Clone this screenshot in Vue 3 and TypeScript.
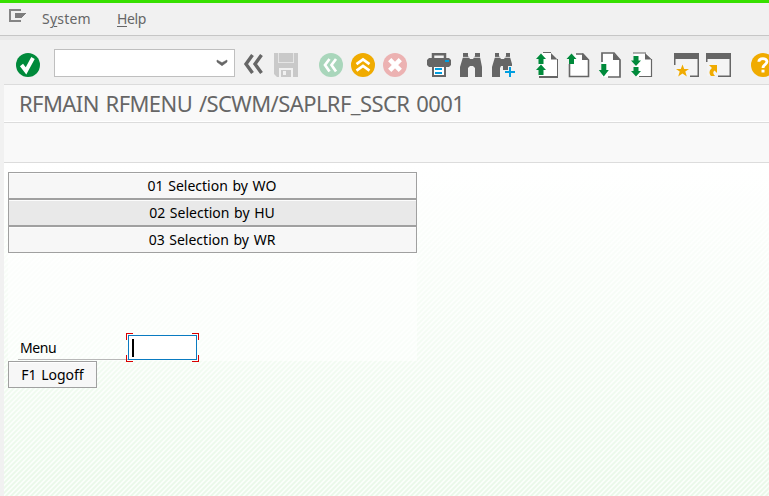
<script setup lang="ts">
import { ref } from 'vue'

interface MenuOption {
  label: string
  hovered?: boolean
}

const options: MenuOption[] = [
  { label: '01 Selection by WO' },
  { label: '02 Selection by HU', hovered: true },
  { label: '03 Selection by WR' },
]
const command = ref('')
</script>

<template>
  <div class="window">
    <header class="menubar">
      <svg class="sysicon" width="19" height="14" viewBox="0 0 19 14" shape-rendering="crispEdges">
        <path d="M12 1H1V12H12" fill="none" stroke="#858585" stroke-width="2" />
        <path d="M6 4H18L15 6L13 9H6Z" fill="#7d7d7d" />
      </svg>
      <span class="menu system">S<u>y</u>stem</span>
      <span class="menu help"><u>H</u>elp</span>
    </header>
    <div class="frame">
      <div class="toolbar">
        <svg class="ic enter" viewBox="0 0 28 28">
          <circle cx="14" cy="14" r="12" fill="#008a3b" />
          <path d="M7.5 14L12 20L19 7" fill="none" stroke="#fff" stroke-width="3.9" />
        </svg>
        <label class="command">
          <input v-model="command" type="text" />
          <svg width="12" height="8" viewBox="0 0 12 8"><path d="M1 1L6 3.7L11 1V3L6 6.7L1 3Z" fill="#666" stroke="#666" stroke-width=".6" /></svg>
        </label>
        <svg class="ic back" viewBox="0 0 28 28">
          <path d="M13.5 4L7 13L13.5 22M22.5 4L16 13L22.5 22" fill="none" stroke="#666" stroke-width="3.4" />
        </svg>
        <svg class="ic save" viewBox="0 0 28 28">
          <path d="M2 2H6V12H22V2H26V26H5L2 23Z" fill="#c9c9c9" />
          <path d="M7 2H21V11H7Z" fill="#c9c9c9" />
          <path d="M6.5 2V11.5H21.5V2" fill="none" stroke="#e5e5e5" />
          <path d="M7 17H21V26H7Z" fill="#f1f1f1" />
          <path d="M9 19H19V26H9Z" fill="#c9c9c9" />
          <path d="M11 20H14V24H11Z" fill="#f1f1f1" />
        </svg>
        <div class="group nav">
          <svg class="ic" viewBox="0 0 28 28">
            <circle cx="14" cy="14" r="12" fill="#a9d6bb" />
            <path d="M12.5 8L8 14L12.5 20.5M19 8L14.5 14L19 20.5" fill="none" stroke="#fff" stroke-width="2.7" />
          </svg>
          <svg class="ic" viewBox="0 0 28 28">
            <circle cx="14" cy="14" r="12" fill="#f0ab00" />
            <path d="M7.5 13.2L14 8.5L20.5 13.2M7.5 19.7L14 15L20.5 19.7" fill="none" stroke="#fff" stroke-width="2.7" />
          </svg>
          <svg class="ic" viewBox="0 0 28 28">
            <circle cx="14" cy="14" r="12" fill="#ecb2b2" />
            <path d="M8.7 8.7L19.3 19.3M19.3 8.7L8.7 19.3" fill="none" stroke="#fff" stroke-width="4.6" />
          </svg>
        </div>
        <div class="group">
          <svg class="ic" viewBox="0 0 28 28">
            <path d="M8 7V3.2H20V7" fill="none" stroke="#666" stroke-width="2.5" />
            <path d="M4 7H24L26 9V14L24 16H4L2 14V9Z" fill="#666" />
            <path d="M7 15H21V26H7Z" fill="#666" /><path d="M9 16H19V24H9Z" fill="#fff" />
            <path d="M20 9H24V11H20ZM10 17H17V19H10ZM10 21H17V23H10Z" fill="#009ee0" />
          </svg>
          <svg class="ic" viewBox="0 0 28 28">
            <path d="M6 2H11V5L13 8H16L18 5V2H23V6L25 16V26H18V17L16 15H13L11 17V26H3V16L6 6Z" fill="#666" />
            <path d="M5 6.4H12M17 6.4H24" stroke="#f1f1f1" stroke-width=".8" />
          </svg>
          <svg class="ic" viewBox="0 0 28 28">
            <path d="M6 2H10V5L12 8H15L17 5V2H21V6L23 13V15H19V19H14V15H12L11 17V26H3V16L6 6Z" fill="#666" />
            <path d="M5 6.4H11M16 6.4H22" stroke="#f1f1f1" stroke-width=".8" />
            <path d="M16 21H26M21 16V26" stroke="#009ee0" stroke-width="2" />
          </svg>
        </div>
        <div class="group">
          <svg class="ic" viewBox="0 0 28 28">
            <path d="M10 2H19L24 8V25H6V6Z" fill="#fff" />
            <path d="M10 1.5H18M24.5 8V25" fill="none" stroke="#666" />
            <path d="M6 25H25V27H6Z" fill="#666" />
            <path d="M18 2L24.5 8.5H18Z" fill="#666" />
            <path d="M8 2.5L13 8H10.5V13H5.5V8H3ZM8 13.5L13 19H10.5V24H5.5V19H3Z" fill="#008a3b" />
          </svg>
          <svg class="ic" viewBox="0 0 28 28">
            <path d="M4 8L10 3H18L24 9V25.5H4Z" fill="#fff" />
            <path d="M11 3H18L23.5 9V25.5H4.5V13" fill="none" stroke="#666" stroke-width="1.6" />
            <path d="M17 2L24 9H17Z" fill="#666" />
            <path d="M6.5 2.5L11.5 8H9V13H4V8H1.5Z" fill="#008a3b" />
          </svg>
          <svg class="ic" viewBox="0 0 28 28">
            <path d="M5 2H17L23 9V26H5Z" fill="#fff" />
            <path d="M5 11V2H17L23 9V26H11" fill="none" stroke="#666" stroke-width="1.7" />
            <path d="M16 2L23.5 9H16Z" fill="#666" />
            <path d="M4.3 13H9.3V19H11.8L6.8 25.5L1.8 19H4.3Z" fill="#008a3b" />
          </svg>
          <svg class="ic" viewBox="0 0 28 28">
            <path d="M5 2H17L23 8V26H7Z" fill="#fff" />
            <path d="M4 2H17M22.5 8V25.5H10" fill="none" stroke="#666" stroke-width="1.2" />
            <path d="M16 2L23 8.5H16Z" fill="#666" />
            <path d="M4.5 5H9.5V9.5H12L7 15L2 9.5H4.5ZM4.5 16H9.5V20H12L7 25.5L2 20H4.5Z" fill="#008a3b" />
          </svg>
        </div>
        <div class="group">
          <svg class="ic" viewBox="0 0 28 28">
            <path d="M2 7H25V25H2Z" fill="#f4f4f4" />
            <path d="M1 2H26V26H17V24.5H24.5V8H2.5V14H1Z" fill="#666" />
            <path d="M9.5 13.5L11.2 18H16L12.3 20.6L13.8 25.5L9.5 22.5L5.2 25.5L6.7 20.6L3 18H7.8Z" fill="#f0ab00" />
          </svg>
          <svg class="ic" viewBox="0 0 28 28">
            <path d="M2 7H25V25H2Z" fill="#f4f4f4" />
            <path d="M1 2H26V26H13V24.5H24.5V8H2.5V11H1Z" fill="#666" />
            <path d="M4 14H12V22L9.5 19.5C7.5 21 8 23 10 25H6C3.5 22 4.5 19 7 17Z" fill="#f0ab00" />
          </svg>
        </div>
        <svg class="ic question" viewBox="0 0 28 28">
          <circle cx="14" cy="14" r="12" fill="#f0ab00" />
          <path d="M9.8 10.8C10 6.5 18 6.5 18 10.8C18 13.3 14 13.5 14 17" fill="none" stroke="#fff" stroke-width="2.8" />
          <path d="M12.5 18.7H15.5V21.5H12.5Z" fill="#fff" />
        </svg>
      </div>
      <h1 class="title"><span>RFMAIN RFMENU /SCWM/SAPLRF_SSCR 0001</span></h1>
      <div class="appbar"></div>
      <main class="screen">
        <svg class="stripes" width="765" height="333">
          <defs>
            <pattern id="hatch" width="5" height="5" patternUnits="userSpaceOnUse">
              <rect width="5" height="5" fill="#fbfffb" />
              <path d="M-1 6L6 -1M-1 1L1 -1M4 6L6 4" stroke="#e9f9e8" stroke-width="1.8" />
            </pattern>
            <linearGradient id="fade" x1="0" y1="0" x2="0" y2="1">
              <stop offset="0" stop-color="#fff" />
              <stop offset="1" stop-color="#fff" stop-opacity="0" />
            </linearGradient>
          </defs>
          <rect width="765" height="333" fill="url(#hatch)" />
          <rect width="765" height="333" fill="url(#fade)" />
        </svg>
        <section class="form">
          <button v-for="o in options" :key="o.label" class="option" :class="{ hovered: o.hovered }">
            <span>{{ o.label }}</span>
          </button>
          <div class="row">
            <span class="label"><span>Menu</span></span>
            <div class="field">
              <span class="caret"></span>
              <i class="tl"></i><i class="tr"></i><i class="bl"></i><i class="br"></i>
            </div>
          </div>
        </section>
        <button class="logoff"><span>F1 Logoff</span></button>
      </main>
    </div>
  </div>
</template>

<style>
body { margin: 0; overflow: hidden; }
</style>

<style scoped>
* { box-sizing: border-box; }
.window { width: 769px; height: 496px; overflow: hidden; background: #f1f1f1; border-top: 3px solid #37e000; font-family: Tahoma, "Noto Sans", sans-serif; font-size: 14px; color: #000; display: flex; flex-direction: column; }
.menubar { height: 37px; flex: none; display: flex; align-items: flex-start; padding: 6px 0 0 9px; border-bottom: 4px solid #e9e9e9; box-shadow: inset 0 -1px #c6c6c6; color: #666; }
.menu { line-height: 20px; white-space: nowrap; }
.menu u { text-underline-offset: 2px; }
.system { margin-left: 14px; width: 75px; letter-spacing: .2px; }
.help { letter-spacing: -.4px; }
.frame { flex: 1; margin-left: 4px; display: flex; flex-direction: column; background: #f9f9f9; }
.toolbar { height: 45px; flex: none; background: #f1f1f1; border-bottom: 1px solid #dcdcdc; padding: 11px 0 0 10px; display: flex; overflow: hidden; }
.ic { width: 28px; height: 28px; flex: none; display: block; }
.command { flex: none; width: 181px; height: 28px; margin: -2px 4px 0 12px; border: 1px solid #bfbfbf; background: #fff; display: flex; align-items: center; padding-right: 6px; }
.command input { flex: 1; min-width: 0; border: 0; outline: 0; background: transparent; }
.save { margin-left: 5px; }
.group { display: flex; gap: 4px; flex: none; margin-right: 16px; }
.nav { margin-left: 17px; }
.title { height: 38px; flex: none; margin: 0; padding-left: 15px; border-bottom: 1px solid #dcdcdc; box-shadow: inset 0 -1px #fff; font-size: 22px; font-weight: 400; line-height: 36px; color: #666; white-space: nowrap; }
.title span { letter-spacing: -.58px; word-spacing: 1.6px; }
.appbar { height: 40px; flex: none; border-bottom: 1px solid #dcdcdc; }
.screen { flex: 1; position: relative; background: #fff; padding: 9px 0 0 4px; display: flex; flex-direction: column; align-items: flex-start; }
.stripes { position: absolute; inset: 0; }
.form { position: relative; width: 409px; height: 189px; display: flex; flex-direction: column; background: rgba(255, 255, 255, .5); }
button { font: inherit; color: #000; border: 1px solid #a0a0a0; border-radius: 0; background: #f7f7f7; box-shadow: inset 0 1px #fff; padding: 0; height: 27px; line-height: 25px; word-spacing: 1px; }
.option { width: 409px; flex: none; padding-right: 1px; box-shadow: inset 0 1px #fcfcfc; }
.hovered { background: #e9e9e9; }
.row { margin-top: auto; display: flex; align-items: flex-end; padding: 0 0 1px 10px; }
.label { width: 110px; height: 25px; border-bottom: 1px solid #b8b8b8; padding-left: 2px; line-height: 26px; letter-spacing: -.4px; }
.field { position: relative; width: 69px; height: 25px; border: 1px solid #0a7bc1; background: #fff; padding: 3px 0 0 3px; }
.caret { display: block; width: 2px; height: 18px; background: #000; }
.field i { position: absolute; width: 7px; height: 7px; border: 0 solid #d90000; }
.field .tl { top: -3px; left: -3px; border-width: 1px 0 0 1px; }
.field .tr { top: -3px; right: -3px; border-width: 1px 1px 0 0; }
.field .bl { bottom: -3px; left: -3px; border-width: 0 0 1px 1px; }
.field .br { bottom: -3px; right: -3px; border-width: 0 1px 1px 0; }
.logoff { position: relative; width: 89px; }
</style>
